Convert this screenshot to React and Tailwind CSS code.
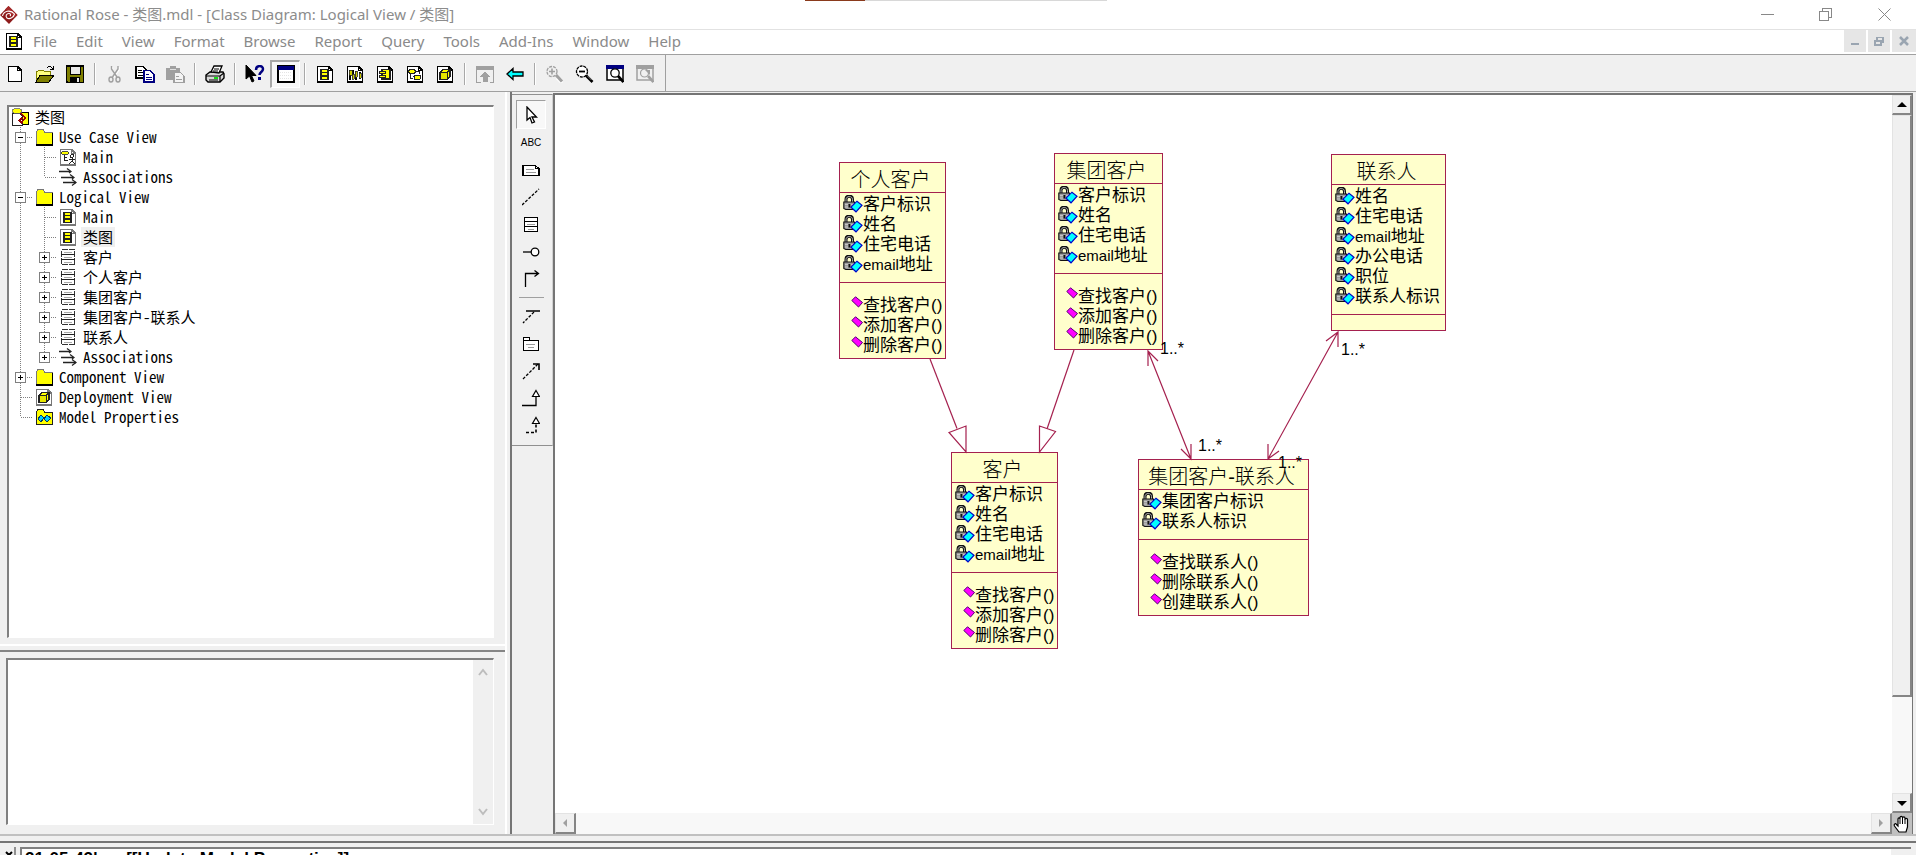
import React from "react";

/* ---------- small drawing helpers ---------- */

function Glyph({ w = 18, h = 18, crisp = true, children }) {
  return (
    <svg
      width={w}
      height={h}
      viewBox={`0 0 ${w} ${h}`}
      fill="none"
      shapeRendering={crisp ? "crispEdges" : "auto"}
      className="block shrink-0"
      aria-hidden="true"
    >
      {children}
    </svg>
  );
}

const Page = ({ stroke = "#000", children }) => (
  <Glyph>
    <path d="M1.500 1.500h11l4 4v11.500h-15z" fill="#fff" stroke={stroke} strokeWidth="1.500" />
    <path d="M12.500 1.500v4h4" stroke={stroke} />
    {children}
  </Glyph>
);

const ClassSheet = ({ stroke = "#000" }) => (
  <Page stroke={stroke}>
    <path d="M5 4.500h7v10h-7z" fill="#ff0" stroke="#222" strokeWidth="1.200" />
    <path d="M5 7.500h7M5 11h7" stroke="#222" strokeWidth="1.200" />
  </Page>
);

const CubeSheet = ({ stroke = "#000" }) => (
  <Page stroke={stroke}>
    <path d="M4 7.500l3-3h7v7l-3 3h-7z" fill="#ff0" stroke="#222" strokeWidth="1.200" />
    <path d="M11 7.500v7h-7v-7zM11 7.500l3-3" fill="#e6e600" stroke="#222" />
  </Page>
);

/* ---------- toolbar icons ---------- */

const icons = {
  New: (
    <Glyph>
      <path d="M2.500 1.500h9l4 4v11h-13z" fill="#fff" stroke="#000" strokeWidth="1.500" />
      <path d="M11.500 1.500v4h4" stroke="#000" />
    </Glyph>
  ),
  Open: (
    <Glyph w={20}>
      <path d="M1 17v-11h2l1-1h4l1 1h6v4" fill="#ffff80" stroke="#808000" />
      <path d="M1 17l4-7h14l-5 7z" fill="#808000" stroke="#000" />
      <path d="M12 3c2-2 4-2 6 1M18 1v3h-3" stroke="#000" />
    </Glyph>
  ),
  Save: (
    <Glyph>
      <path d="M.5 1h17v16.500h-16l-1-1z" fill="#808000" stroke="#000" strokeWidth="1.500" />
      <path d="M4 1h10v8h-10z" fill="#e8e8e8" stroke="#000" />
      <path d="M4 12h10v5h-10z" fill="#000" />
      <path d="M11 13h2v4h-2z" fill="#e8e8e8" />
    </Glyph>
  ),
  Cut: (
    <Glyph crisp={false}>
      <g stroke="#fff" strokeWidth="1.300" transform="translate(1 1)">
        <path d="M5.500 1v3l5.500 8M12 1v3l-5.500 8" />
      </g>
      <g stroke="#a0a0a0" strokeWidth="1.400">
        <path d="M5.500 1v3l5.500 8M12 1v3l-5.500 8" />
        <ellipse cx="5" cy="14.500" rx="2" ry="2.500" />
        <ellipse cx="12" cy="14.500" rx="2" ry="2.500" />
      </g>
    </Glyph>
  ),
  Copy: (
    <Glyph w={20}>
      <path d="M1 1.500h7l3 3v8.500h-10z" fill="#fff" stroke="#000" strokeWidth="1.300" />
      <path d="M3 5h4M3 7.500h5M3 10h5" stroke="#000" />
      <path d="M9 5.500h6l4 4v7.500h-10z" fill="#fff" stroke="#000080" strokeWidth="1.300" />
      <path d="M11 9.500h3M11 12h6M11 14.500h6" stroke="#000080" />
    </Glyph>
  ),
  Paste: (
    <Glyph w={20}>
      <path d="M1 3h4v-2h6v2h4v12h-14z" fill="#a0a0a0" />
      <path d="M5 4h6" stroke="#e0e0e0" />
      <path d="M9 7h6l4 4v6.500h-10z" fill="#f4f4f4" stroke="#a0a0a0" strokeWidth="1.300" />
      <path d="M11 11h3M11 14h6" stroke="#a0a0a0" />
    </Glyph>
  ),
  Print: (
    <Glyph w={20} crisp={false}>
      <path d="M1 10l4-3h13l1 2v4l-4 4h-12l-2-2z" fill="#d8d8d8" stroke="#000" strokeWidth="1.400" />
      <path d="M6 7l3-6h8l-3 7z" fill="#fff" stroke="#000" strokeWidth="1.300" />
      <path d="M9 4h5M8 6h5" stroke="#000" />
      <path d="M1 11h14l4-3M15 11v6" stroke="#000" strokeWidth="1.200" />
      <path d="M4 15h9" stroke="#000" />
      <path d="M9 13h4" stroke="#0d0" strokeWidth="1.800" />
    </Glyph>
  ),
  "Context help": (
    <Glyph w={20} crisp={false}>
      <path d="M1 0v14l3.500-3 2.500 6 2-1-2.500-5.500h4.500z" fill="#000" stroke="#000" />
      <path d="M11 5c0-5 7-5 7-1 0 3-3.500 3-3.500 6" stroke="#000080" strokeWidth="2.500" />
      <path d="M13 12h3v3h-3z" fill="#000080" />
    </Glyph>
  ),
  "View documentation": (
    <Glyph>
      <path d="M1 1h16v16h-16z" fill="#fff" stroke="#000" strokeWidth="1.500" />
      <path d="M1 1h16v4h-16z" fill="#000080" />
      <path d="M3 7h12M3 10h12M3 13h12" stroke="#e4e4e4" strokeDasharray="1 1" />
    </Glyph>
  ),
  "Browse class diagram": <ClassSheet />,
  "Browse interaction diagram": (
    <Page>
      <path d="M4 5v10M7 5v6M10 7v8M14 7v7" stroke="#000" strokeWidth="1.300" />
      <path d="M3 5h3v5h-3zM6 9h2v5h-2zM9 6h2v6h-2zM13 8h2v5h-2z" fill="#cc0" stroke="#222" strokeWidth=".8" />
    </Page>
  ),
  "Browse component diagram": (
    <Page>
      <path d="M6 4.500h8v9.500h-8z" fill="#ff0" stroke="#222" strokeWidth="1.200" />
      <path d="M3 6.500h6v2h-6zM3 10.500h6v2h-6z" fill="#ff0" stroke="#222" />
    </Page>
  ),
  "Browse state machine diagram": (
    <Page>
      <ellipse cx="6" cy="6.500" rx="3.500" ry="2" fill="#ff0" stroke="#222" />
      <rect x="8" y="10" width="6.500" height="4.500" rx="1.500" fill="#ff0" stroke="#222" />
      <path d="M4 9v4h3M10 6h3v3" stroke="#222" />
    </Page>
  ),
  "Browse deployment diagram": <CubeSheet />,
  "Browse parent": (
    <Glyph>
      <path d="M0 1h18v4h-18z" fill="#a0a0a0" />
      <path d="M.5 1v16h4M17.500 1v16h-4" stroke="#a0a0a0" />
      <path d="M9 6l5.500 6h-3v5h-5v-5h-3z" fill="#a0a0a0" />
    </Glyph>
  ),
  "Browse previous diagram": (
    <Glyph crisp={false}>
      <path d="M1 9l6-5.500v3.500h10v4h-10v3.500z" fill="#0ff" stroke="#000" strokeWidth="1.300" />
    </Glyph>
  ),
  "Zoom in": (
    <Glyph w={20} crisp={false}>
      <path d="M12 13l5 5" stroke="#fff" strokeWidth="3" />
      <circle cx="7" cy="6.500" r="5" stroke="#a0a0a0" strokeWidth="1.300" strokeDasharray="3 1" />
      <path d="M4 6.500h6M7 3.500v6" stroke="#a0a0a0" strokeWidth="1.600" />
      <path d="M11 10l6 6.500" stroke="#a0a0a0" strokeWidth="3" />
    </Glyph>
  ),
  "Zoom out": (
    <Glyph w={20} crisp={false}>
      <circle cx="7" cy="6.500" r="5.500" fill="#fff" stroke="#000" strokeWidth="1.300" strokeDasharray="3 .8" />
      <path d="M4 6.500h6" stroke="#000" strokeWidth="1.800" />
      <path d="M11 10.500l6.500 6.500" stroke="#000" strokeWidth="2.600" />
      <path d="M12.500 11l4 4" stroke="#999" strokeWidth=".8" />
    </Glyph>
  ),
  "Fit in window": (
    <Glyph crisp={false}>
      <path d="M1 1h16v14h-16z" fill="#fff" stroke="#000" strokeWidth="1.500" />
      <path d="M0 0h18v4h-18z" fill="#000080" />
      <circle cx="9" cy="8" r="4.200" fill="#fff" stroke="#000" strokeWidth="1.300" />
      <path d="M12 11l5.500 6" stroke="#000" strokeWidth="2.600" />
    </Glyph>
  ),
  "Undo fit in window": (
    <Glyph crisp={false}>
      <path d="M1 1h16v14h-16z" stroke="#a0a0a0" strokeWidth="1.500" />
      <path d="M0 0h18v4h-18z" fill="#a0a0a0" />
      <circle cx="8.500" cy="8" r="4" fill="#f0f0f0" stroke="#a0a0a0" strokeWidth="1.200" />
      <path d="M9 5h5v5z" fill="#a0a0a0" />
      <path d="M12 11l5.500 6" stroke="#a0a0a0" strokeWidth="2.600" />
    </Glyph>
  ),
};

const toolbarGroups = [
  ["New", "Open", "Save"],
  ["Cut", "Copy", "Paste"],
  ["Print"],
  ["Context help", "View documentation"],
  [
    "Browse class diagram",
    "Browse interaction diagram",
    "Browse component diagram",
    "Browse state machine diagram",
    "Browse deployment diagram",
  ],
  ["Browse parent", "Browse previous diagram"],
  ["Zoom in", "Zoom out", "Fit in window", "Undo fit in window"],
];

/* ---------- tree ---------- */

const treeIcons = {
  root: (
    <Glyph>
      <path d="M6 4h11.500v12h-11.500z" fill="#ff0" stroke="#000" />
      <path d="M1 5h7l3 3v9h-10z" fill="#fff" stroke="#222" />
      <ellipse cx="6" cy="3" rx="5" ry="2.500" fill="#ff0" stroke="#666" strokeWidth=".8" />
      <path d="M9.500 5l5 5-4 4.500-2-2 2.500-2.500" stroke="#900" strokeWidth="1.600" />
    </Glyph>
  ),
  folder: (
    <Glyph>
      <path d="M1 16.500v-12l2-3h5l2 3h7v12z" fill="#ff0" stroke="#777" />
      <path d="M1 17h16.500v-12" stroke="#000" strokeWidth="1.500" />
    </Glyph>
  ),
  usecase: (
    <Page stroke="#777">
      <ellipse cx="6" cy="5" rx="4" ry="1.500" fill="#ff0" stroke="#222" strokeWidth=".8" />
      <path d="M5 7v5h4M5 9h3M13 9v4l-3 3M13 13l3 3M10 11h6" stroke="#222" />
      <circle cx="13" cy="8" r="1.500" stroke="#222" fill="#fff" />
    </Page>
  ),
  assoc: (
    <Glyph crisp={false}>
      <path d="M0 3.500h11M2 9.500h12M4 14.500h13" stroke="#222" strokeWidth="1.300" />
      <path d="M8 .5l4 3-2 1.500M11 6.500l4 3-2 1.500M13 11.500l4 3-4 3" stroke="#222" strokeWidth="1.200" />
    </Glyph>
  ),
  diagram: <ClassSheet stroke="#777" />,
  cls: (
    <Glyph>
      <path d="M2.500 1.500h13v15h-13z" fill="#fff" stroke="#333" strokeDasharray="6 1" />
      <path d="M2 6.500h14M2 11.500h14" stroke="#222" />
      <path d="M5 4h8M5 9h8M5 14h8" stroke="#aaa" />
    </Glyph>
  ),
  cube: <CubeSheet stroke="#777" />,
  props: (
    <Glyph>
      <path d="M1 16.500v-12l2-3h5l2 3h7v12z" fill="#ff0" stroke="#222" />
      <path d="M3 11l3-4 3 3-3 4zM9 11l3-4 4 3-4 4z" fill="#0cf" stroke="#036" />
    </Glyph>
  ),
};

/* guides: one letter per indent column
   v = passing line, t = branch, l = last branch; box = expander */
const tree = [
  { icon: "root", label: "类图", guides: "" },
  { icon: "folder", label: "Use Case View", guides: "t", box: "-" },
  { icon: "usecase", label: "Main", guides: "vt" },
  { icon: "assoc", label: "Associations", guides: "vl" },
  { icon: "folder", label: "Logical View", guides: "t", box: "-" },
  { icon: "diagram", label: "Main", guides: "vt" },
  { icon: "diagram", label: "类图", guides: "vt", selected: true },
  { icon: "cls", label: "客户", guides: "vt", box: "+" },
  { icon: "cls", label: "个人客户", guides: "vt", box: "+" },
  { icon: "cls", label: "集团客户", guides: "vt", box: "+" },
  { icon: "cls", label: "集团客户-联系人", guides: "vt", box: "+" },
  { icon: "cls", label: "联系人", guides: "vt", box: "+" },
  { icon: "assoc", label: "Associations", guides: "vl", box: "+" },
  { icon: "folder", label: "Component View", guides: "t", box: "+" },
  { icon: "cube", label: "Deployment View", guides: "t" },
  { icon: "props", label: "Model Properties", guides: "l" },
];

function Guide({ kind, box }) {
  return (
    <Glyph w={24} h={20}>
      <g stroke="#808080" strokeDasharray="1 1">
        {kind !== "l" && <path d="M11.500 0v20" />}
        {kind === "l" && <path d="M11.500 0v10" />}
        {kind !== "v" && <path d="M12 10.500h12" />}
      </g>
      {box && (
        <g>
          <path d="M6.500 5.500h10v10h-10z" fill="#fff" stroke="#808080" />
          <path d={box === "+" ? "M9 10.500h5M11.500 8v5" : "M9 10.500h5"} stroke="#000" />
        </g>
      )}
    </Glyph>
  );
}

function TreeRow({ row }) {
  const cols = row.guides.split("");
  return (
    <li className="flex h-5 items-center">
      {cols.map((kind, i) => (
        <Guide key={i} kind={kind} box={i === cols.length - 1 ? row.box : undefined} />
      ))}
      <span className="ml-0.5">{treeIcons[row.icon]}</span>
      <span className={row.selected ? "ml-1 bg-[#efefef] px-0.5 leading-5" : "ml-1 px-0.5 leading-5"}>
        {row.label}
      </span>
    </li>
  );
}

/* ---------- toolbox ---------- */

const toolboxIcons = [
  [
    "Selection tool",
    <Glyph crisp={false}>
      <path d="M5 1v13l3-2.500 2 5.500 2.500-1-2.500-5h4.500z" fill="#fff" stroke="#000" strokeWidth="1.300" />
    </Glyph>,
  ],
  ["Text box", <span className="font-[Liberation_Sans,sans-serif] text-[10px] leading-none">ABC</span>],
  [
    "Note",
    <Glyph>
      <path d="M1 4.500h12l4 3v7h-16z" fill="#fff" stroke="#000" strokeWidth="1.200" />
      <path d="M13 4.500v3h4" stroke="#000" />
      <path d="M4 8.500h8M4 11.500h10" stroke="#999" />
    </Glyph>,
  ],
  ["Anchor note", <Glyph crisp={false}><path d="M0 17L17 1" stroke="#000" strokeWidth="1.300" strokeDasharray="3 1.500" /></Glyph>],
  [
    "Class",
    <Glyph>
      <path d="M2.500 1.500h13v14h-13z" fill="#fff" stroke="#000" />
      <path d="M2 5.500h14M2 10.500h14" stroke="#000" />
      <path d="M5 8h8M6 13h6" stroke="#999" />
    </Glyph>,
  ],
  [
    "Interface",
    <Glyph crisp={false}>
      <path d="M1 9h8" stroke="#000" strokeWidth="1.300" />
      <circle cx="13" cy="9" r="3.800" fill="#fff" stroke="#000" strokeWidth="1.300" />
    </Glyph>,
  ],
  [
    "Unidirectional association",
    <Glyph crisp={false}><path d="M3.500 17v-13.500h13M12.500.5l4 3-4 3" stroke="#000" strokeWidth="1.300" /></Glyph>,
  ],
  null,
  [
    "Association class",
    <Glyph crisp={false}>
      <path d="M4 4h14" stroke="#000" strokeWidth="1.500" />
      <path d="M12 5L1 16" stroke="#000" strokeWidth="1.300" strokeDasharray="3 1.500" />
    </Glyph>,
  ],
  [
    "Package",
    <Glyph>
      <path d="M1.500 2.500h6v3h9v10h-15z" fill="#fff" stroke="#000" />
      <path d="M1 5.500h8" stroke="#000" />
      <path d="M4 9.500h9M6 12h6" stroke="#999" />
    </Glyph>,
  ],
  [
    "Dependency",
    <Glyph crisp={false}>
      <path d="M1 17L16 2" stroke="#000" strokeWidth="1.300" strokeDasharray="3 1.500" />
      <path d="M11 2h6v6" stroke="#000" strokeWidth="1.600" />
    </Glyph>,
  ],
  [
    "Generalization",
    <Glyph crisp={false}>
      <path d="M0 16.500h14v-9" stroke="#000" strokeWidth="1.300" />
      <path d="M14 1.500l3.500 6h-7z" fill="#fff" stroke="#000" strokeWidth="1.200" />
    </Glyph>,
  ],
  [
    "Realize",
    <Glyph crisp={false}>
      <path d="M4 16.500h10v-9" stroke="#000" strokeWidth="1.600" strokeDasharray="3 2" />
      <path d="M14 1.500l3.500 6h-7z" fill="#fff" stroke="#000" strokeWidth="1.200" />
    </Glyph>,
  ],
];

/* ---------- diagram ---------- */

const LockIcon = () => (
  <Glyph w={20} h={18} crisp={false}>
    <path d="M3 8v-3.500c0-4.500 6.500-4.500 6.500 0v3.500" stroke="#111" strokeWidth="3" />
    <path d="M3 8v-3.500c0-4 6.500-4 6.500 0v3.500" stroke="#b0b0b0" strokeWidth="1" />
    <path d="M.8 7h10.700v7.500h-8.700l-2-1z" fill="#9c9c9c" stroke="#111" strokeWidth="1.100" />
    <path d="M2 9.500h3M8 9.500h3M2 12h3M8 12h3" stroke="#c8c8c8" strokeWidth=".9" />
    <path d="M5.500 9h1.800v3.500h-1.800z" fill="#111" />
    <path d="M8 12.200l6-6 5 4-6 6.600z" fill="#0ff" stroke="#0000c8" strokeWidth="1.200" />
  </Glyph>
);

const OperationIcon = () => (
  <Glyph w={12} h={12} crisp={false}>
    <path d="M.8 4.500L4.500.8l7 5.700-4 4.500z" fill="#f0f" stroke="#500070" />
  </Glyph>
);

function ClassBox({ place, name, attributes, operations }) {
  return (
    <section
      className={`absolute border border-[#a5214f] bg-[#ffffcc] font-[Liberation_Sans,Noto_Sans_CJK_SC,sans-serif] text-black ${place}`}
    >
      <h2 className="flex h-[29px] items-center justify-center pt-1 pr-1 text-[20px] leading-none font-light whitespace-nowrap">
        {name}
      </h2>
      <ul className="border-t border-[#a5214f] pt-[2px] pb-[7px] pl-[3px]">
        {attributes.map((a) => (
          <li key={a} className="flex h-5 items-start">
            <LockIcon />
            <span className="text-[17px] leading-5 whitespace-nowrap">
              {a.startsWith("email") ? (
                <>
                  <span className="text-[15px]">email</span>
                  {a.slice(5)}
                </>
              ) : (
                a
              )}
            </span>
          </li>
        ))}
      </ul>
      <ul className={`border-t border-[#a5214f] pl-[11px] ${operations.length ? "pt-[13px] pb-[2px]" : "h-4"}`}>
        {operations.map((o) => (
          <li key={o} className="flex h-5 items-start">
            <OperationIcon />
            <span className="text-[17px] leading-5 whitespace-nowrap">{o}</span>
          </li>
        ))}
      </ul>
    </section>
  );
}

const personal = ["客户标识", "姓名", "住宅电话", "email地址"];
const customerOps = ["查找客户()", "添加客户()", "删除客户()"];

const classes = [
  { place: "left-[284px] top-[67px] w-[107px]", name: "个人客户", attributes: personal, operations: customerOps },
  { place: "left-[499px] top-[58px] w-[109px]", name: "集团客户", attributes: personal, operations: customerOps },
  {
    place: "left-[776px] top-[59px] w-[115px]",
    name: "联系人",
    attributes: ["姓名", "住宅电话", "email地址", "办公电话", "职位", "联系人标识"],
    operations: [],
  },
  { place: "left-[396px] top-[357px] w-[107px]", name: "客户", attributes: personal, operations: customerOps },
  {
    place: "left-[583px] top-[364px] w-[171px]",
    name: "集团客户-联系人",
    attributes: ["集团客户标识", "联系人标识"],
    operations: ["查找联系人()", "删除联系人()", "创建联系人()"],
  },
];

const multiplicities = [
  "left-[605px] top-[244px]",
  "left-[786px] top-[245px]",
  "left-[643px] top-[341px]",
  "left-[723px] top-[358px]",
];

function Diagram() {
  return (
    <div className="relative min-h-0 min-w-0 overflow-hidden bg-white">
      {classes.map((c) => (
        <ClassBox key={c.name} {...c} />
      ))}
      <svg width="900" height="560" className="absolute top-0 left-0" fill="none" aria-hidden="true">
        <g transform="translate(-555 -95)" stroke="#a5214f" strokeWidth="1.200">
          <path d="M930 359L957 428.500" />
          <path d="M949 432.500L966 426v26z" fill="#fff" />
          <path d="M1074 350L1047 429" />
          <path d="M1039.500 426L1055.500 431.500L1039.500 452z" fill="#fff" />
          <path d="M1148 351L1191 459M1148 366v-15l10 10M1181 449l10 10v-15" />
          <path d="M1338 332L1268 459M1326 341l12-9v15M1268 444v15l11-8" />
        </g>
      </svg>
      {multiplicities.map((m) => (
        <span key={m} className={`absolute font-[Liberation_Sans,sans-serif] text-[16px] leading-5 text-black ${m}`}>
          1..*
        </span>
      ))}
    </div>
  );
}

/* ---------- scroll bars ---------- */

const raised =
  "flex shrink-0 items-center justify-center border-t border-l border-r-2 border-b-2 border-t-[#e3e3e3] border-l-[#e3e3e3] border-r-[#858585] border-b-[#858585] bg-[#f0f0f0]";

const Triangle = ({ dir, color }) => {
  const d = { up: "M0 6l5-5 5 5z", down: "M0 2h10l-5 5z", left: "M7 0v8l-4-4z", right: "M3 0v8l4-4z" }[dir];
  return (
    <Glyph w={10} h={8} crisp={false}>
      <path d={d} fill={color} />
    </Glyph>
  );
};

/* ---------- page ---------- */

const menus = ["File", "Edit", "View", "Format", "Browse", "Report", "Query", "Tools", "Add-Ins", "Window", "Help"];

export default function App() {
  return (
    <div className="relative flex h-screen flex-col overflow-hidden bg-[#f0f0f0] font-[Noto_Sans,Noto_Sans_CJK_SC,sans-serif] text-black">
      <div className="absolute top-0 left-[42%] flex h-px w-[302px]">
        <div className="w-[60px] bg-[#8a3a1c]" />
        <div className="flex-1 bg-[#d8d8d8]" />
      </div>

      <header className="flex h-[30px] shrink-0 items-center border-b border-[#e2e2e2] bg-white">
        <svg width="18" height="20" viewBox="0 0 18 20" className="block" fill="none" aria-hidden="true">
          <path d="M8.500 1L17.500 10 9 19 0 10z" fill="#8e1b1b" />
          <path d="M8.500 1L17.500 10l-3 3L5 4.500z" fill="#a52a2a" />
          <path d="M2.500 11c1-5 8-7 12-2-1 4-5 5.500-7.500 4-2-2-.5-4.500 2-4.500 1.500 0 2 1.500 1 2.500" stroke="#fff" strokeWidth="1.100" />
        </svg>
        <h1 className="ml-1.5 text-[15px] whitespace-nowrap text-[#8c8c8c]">
          Rational Rose - 类图.mdl - [Class Diagram: Logical View / 类图]
        </h1>
        <div className="ml-auto flex items-center pr-[2px]">
          <button aria-label="Minimize" className="flex h-7 w-[58px] items-center justify-center">
            <Glyph w={13} h={13}><path d="M0 6.500h13" stroke="#888" /></Glyph>
          </button>
          <button aria-label="Restore" className="flex h-7 w-[58px] items-center justify-center">
            <Glyph w={13} h={13}>
              <path d="M.5 3.500h9v9h-9zM3 3v-2.500h9.500v9h-3" stroke="#888" />
            </Glyph>
          </button>
          <button aria-label="Close" className="flex h-7 w-[60px] items-center justify-center">
            <Glyph w={13} h={13} crisp={false}><path d="M.5.5l12 12M12.500.5l-12 12" stroke="#888" /></Glyph>
          </button>
        </div>
      </header>

      <nav className="flex h-[25px] shrink-0 items-center border-b border-[#a0a0a0] bg-white pb-[2px] pl-[5px]">
        <ClassSheet />
        <div className="ml-[10px] flex gap-[19px]">
          {menus.map((m) => (
            <button key={m} className="text-[15px] leading-[22px] text-[#8a8a8a]">
              {m}
            </button>
          ))}
        </div>
        <div className="ml-auto flex gap-[2px] self-stretch">
          <button aria-label="Minimize diagram" className="flex w-[22px] items-center justify-center bg-[#e6e6e6]">
            <Glyph w={10} h={10}><path d="M1 7h8v2h-8z" fill="#9aa5b1" /></Glyph>
          </button>
          <button aria-label="Restore diagram" className="flex w-[22px] items-center justify-center bg-[#e6e6e6]">
            <Glyph w={10} h={10}><path d="M1 5h6v4h-6zM3 4v-2.500h6v4.500h-2" stroke="#9aa5b1" strokeWidth="1.500" /></Glyph>
          </button>
          <button aria-label="Close diagram" className="flex w-[24px] items-center justify-center bg-[#e6e6e6]">
            <Glyph w={10} h={10} crisp={false}><path d="M1 1l8 8M9 1l-8 8" stroke="#9aa5b1" strokeWidth="2.500" /></Glyph>
          </button>
        </div>
      </nav>

      <div className="flex h-[37px] shrink-0 items-stretch border-b border-[#a0a0a0]">
        <div className="flex items-center border-r border-[#a0a0a0] pt-px pr-[5px]">
          {toolbarGroups.map((group, g) => (
            <React.Fragment key={g}>
              {g > 0 && <span className="mx-[4px] h-[22px] w-[2px] border-l border-[#a8a8a8] border-r border-r-white" />}
              {group.map((name) => (
                <button
                  key={name}
                  aria-label={name}
                  className={
                    name === "View documentation"
                      ? "flex h-[28px] w-[30px] items-center justify-center border-t-2 border-r border-b border-l-2 border-t-[#a8a8a8] border-r-white border-b-white border-l-[#a8a8a8] bg-[#f8f8f8]"
                      : "flex h-[28px] w-[30px] items-center justify-center"
                  }
                >
                  {icons[name]}
                </button>
              ))}
            </React.Fragment>
          ))}
        </div>
      </div>

      <main className="flex min-h-0 flex-1 border-b-2 border-[#c0c0c0]">
        <div className="flex w-[507px] shrink-0 flex-col border-r-2 border-white pt-[13px]">
          <ul className="mr-[11px] ml-[7px] min-h-0 flex-1 overflow-hidden border-t-2 border-r border-b border-l-2 border-t-[#808080] border-r-white border-b-white border-l-[#808080] bg-white font-[Noto_Sans_Mono_CJK_SC,Liberation_Mono,Noto_Sans_CJK_SC,monospace] text-[15px]">
            {tree.map((row, i) => (
              <TreeRow key={i} row={row} />
            ))}
          </ul>
          <div className="mt-1.5 h-0.5 shrink-0 bg-white" />
          <div className="mt-1 h-0.5 shrink-0 bg-[#858585]" />
          <div className="mt-1.5 mr-[11px] mb-[9px] ml-[6px] flex h-[167px] shrink-0 border-t-2 border-r border-b border-l-2 border-t-[#808080] border-r-white border-b-white border-l-[#808080] bg-white">
            <textarea aria-label="Documentation" className="min-w-0 flex-1 resize-none overflow-hidden bg-white outline-none" />
            <div className="flex w-5 flex-col items-center justify-between bg-[#f0f0f0] py-[8px]">
              <Glyph w={10} h={8} crisp={false}><path d="M1 7l4-5 4 5" stroke="#bdbdbd" strokeWidth="2" /></Glyph>
              <Glyph w={10} h={8} crisp={false}><path d="M1 1l4 5 4-5" stroke="#bdbdbd" strokeWidth="2" /></Glyph>
            </div>
          </div>
        </div>

        <div className="ml-[3px] w-[43px] shrink-0 border-l-2 border-[#757575] pt-[2px]">
          <div className="flex h-[352px] flex-col items-center border-t border-r border-b border-t-[#909090] border-r-[#d0d0d0] border-b-[#909090] pt-[5px] pr-[2px] pb-[6px]">
            {toolboxIcons.map((item, i) =>
              item ? (
                <button
                  key={item[0]}
                  aria-label={item[0]}
                  className={
                    i === 0
                      ? "flex w-[30px] flex-1 items-center justify-center border-t border-r border-b border-l border-t-[#a0a0a0] border-r-white border-b-white border-l-[#a0a0a0] bg-[#f8f8f8]"
                      : "flex w-[30px] flex-1 items-center justify-center"
                  }
                >
                  {item[1]}
                </button>
              ) : (
                <span key="separator" className="my-1 h-[2px] w-[25px] border-t border-[#a0a0a0]" />
              )
            )}
          </div>
        </div>

        <div className="mt-px mr-[3px] grid min-w-0 flex-1 grid-cols-[1fr_20px] grid-rows-[1fr_21px] border-t-2 border-r border-l-2 border-[#757575]">
          <Diagram />
          <div className="flex flex-col bg-[#f8f8f8]">
            <button aria-label="Scroll up" className={`${raised} h-5`}>
              <Triangle dir="up" color="#000" />
            </button>
            <div className={`${raised} flex-6`} />
            <div className="flex-1" />
            <button aria-label="Scroll down" className={`${raised} h-5`}>
              <Triangle dir="down" color="#000" />
            </button>
          </div>
          <div className="flex bg-[#f8f8f8]">
            <button aria-label="Scroll left" className={`${raised} w-[21px]`}>
              <Triangle dir="left" color="#a0a0a0" />
            </button>
            <div className="flex-1" />
            <button aria-label="Scroll right" className={`${raised} w-[21px]`}>
              <Triangle dir="right" color="#a0a0a0" />
            </button>
          </div>
          <button aria-label="Pan diagram" className="flex items-center justify-center bg-[#c0c0c0]">
            <Glyph crisp={false}>
              <path
                d="M6 17L1.500 11c-1-2 1-3 2-1.500L5 11V4c0-1.500 2-1.500 2 0V2.500c0-1.600 2.500-1.600 2.500 0V3c0-1.500 2.500-1.500 2.500 0v1.500c0-1.500 2.500-1.500 2.500 0V12L13 17z"
                fill="#fff"
                stroke="#000"
                strokeWidth="1.200"
              />
              <path d="M7 4v5M9.500 3v6M12 4v5" stroke="#000" />
            </Glyph>
          </button>
        </div>
      </main>

      <footer className="h-[19px] shrink-0 overflow-hidden">
        <div className="mt-[5px] h-[2px] bg-[#757575]" />
        <div className="mt-[4px] flex items-start">
          <button
            aria-label="Close log"
            className="ml-[3px] flex h-5 w-[13px] shrink-0 justify-center border-r-2 border-[#909090] pt-1"
          >
            <Glyph w={8} h={8} crisp={false}><path d="M1 1l6 6M7 1L1 7" stroke="#000" strokeWidth="2" /></Glyph>
          </button>
          <div className="mr-[5px] ml-1 flex h-[40px] flex-1 border-t-2 border-l-2 border-[#808080] bg-white">
            <p className="flex-1 pl-[3px] font-[Liberation_Sans,sans-serif] text-[17px] leading-5 font-bold whitespace-pre">
              {"21:05:42|      [[Update Model Properties]]"}
            </p>
            <div className="w-5 bg-[#f0f0f0]" />
          </div>
        </div>
      </footer>
    </div>
  );
}
